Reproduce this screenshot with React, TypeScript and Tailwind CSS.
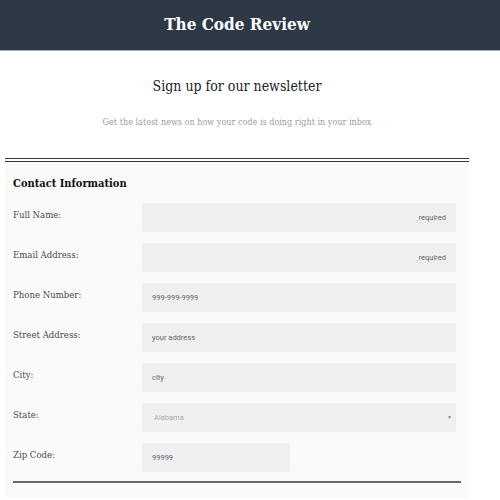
const rows = [
  { label: "Full Name:", placeholder: "required", align: "right" },
  { label: "Email Address:", placeholder: "required", align: "right" },
  { label: "Phone Number:", placeholder: "999-999-9999", align: "left" },
  { label: "Street Address:", placeholder: "your address", align: "left" },
  { label: "City:", placeholder: "city", align: "left" },
];

const Field = ({ label, children }: { label: string; children: React.ReactNode }) => (
  <div className="flex items-start h-[29px]">
    <label className="w-[129px] pt-[5px] text-[9.5px] leading-[14px] text-[#4a4a4a]">{label}</label>
    {children}
  </div>
);

export default function App() {
  return (
    <div className="min-h-[500px] bg-white font-['DejaVu_Serif_Condensed','DejaVu_Serif',serif] [font-stretch:condensed]">
      <header className="h-[51px] bg-[#2d3a46] border-b border-[#a4acb4]">
        <div className="w-[474px] h-[50px] flex items-center justify-center">
          <h1 className="text-[17px] font-bold text-white">The Code Review</h1>
        </div>
      </header>

      <div className="w-[474px]">
        <h2 className="mt-[25px] text-center text-[14px] leading-[20px] text-[#222]">
          Sign up for our newsletter
        </h2>
        <p className="mt-[20px] text-center text-[9px] leading-[12px] text-[#9a9ea3]">
          Get the latest news on how your code is doing right in your inbox
        </p>

        <div className="ml-[5px] w-[464px] mt-[30px]">
          <div className="h-px bg-[#2d3a46]" />
          <div className="h-[2px]" />
          <div className="h-px bg-[#2d3a46]" />

          <section className="bg-[#fafafa] pl-[8px] pr-[13px] pt-[13px] pb-[15px]">
            <h3 className="text-[11px] leading-[18px] font-bold text-[#111]">Contact Information</h3>

            <div className="mt-[10px] flex flex-col gap-[11px]">
              {rows.map((r) => (
                <Field key={r.label} label={r.label}>
                  <div
                    className={`flex-1 h-[29px] rounded-[2px] bg-[#eeeff1] flex items-center px-[10px] font-['Roboto',sans-serif] [font-stretch:normal] text-[7.5px] text-[#666] ${
                      r.align === "right" ? "justify-end" : "justify-start"
                    }`}
                  >
                    {r.placeholder}
                  </div>
                </Field>
              ))}

              <Field label="State:">
                <div className="flex-1 h-[29px] rounded-[2px] bg-[#eeeff1] flex items-center justify-between pl-[12px] pr-[4px] font-['Roboto',sans-serif] [font-stretch:normal] text-[7.5px] text-[#a9abae]">
                  <span>Alabama</span>
                  <span className="text-[5px] text-[#888]">▼</span>
                </div>
              </Field>

              <Field label="Zip Code:">
                <div className="w-[148px] h-[29px] rounded-[2px] bg-[#eeeff1] flex items-center px-[10px] font-['Roboto',sans-serif] [font-stretch:normal] text-[7.5px] text-[#666]">
                  99999
                </div>
              </Field>
            </div>

            <div className="mt-[9px] mr-[-5px] h-[2px] bg-[#666a6e]" />
          </section>
        </div>
      </div>
    </div>
  );
}
